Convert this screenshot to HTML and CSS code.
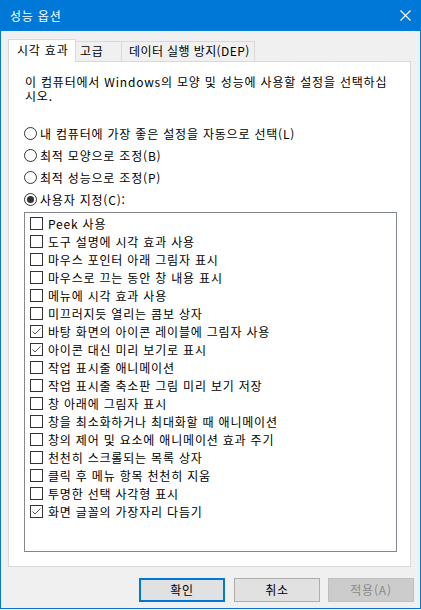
FILE: index.html
```html
<!DOCTYPE html>
<html lang="ko">
<head>
<meta charset="utf-8">
<title>성능 옵션</title>
<link rel="stylesheet" href="styles.css">
</head>
<body>
<div class="window">
  <div class="titlebar">
    <span class="title">성능 옵션</span>
    <svg class="close" width="11" height="11" viewBox="0 0 11 11"><path d="M0.5 0.5 L10.5 10.5 M10.5 0.5 L0.5 10.5" stroke="#fff" stroke-width="1.1" fill="none"/></svg>
  </div>
  <div class="content">
    <div class="tabs">
      <div class="tab active">시각 효과</div>
      <div class="tab t2">고급</div>
      <div class="tab t3">데이터 실행 방지(DEP)</div>
    </div>
    <div class="panel">
      <p class="desc">이 컴퓨터에서 Windows의 모양 및 성능에 사용할 설정을 선택하십<br>시오.</p>
      <div class="radios">
        <div class="radio"><span class="circle"></span><span>내 컴퓨터에 가장 좋은 설정을 자동으로 선택(L)</span></div>
        <div class="radio"><span class="circle"></span><span>최적 모양으로 조정(B)</span></div>
        <div class="radio"><span class="circle"></span><span>최적 성능으로 조정(P)</span></div>
        <div class="radio"><span class="circle on"></span><span>사용자 지정(C):</span></div>
      </div>
      <div class="listbox">
        <div class="item"><span class="box"></span><span>Peek 사용</span></div>
        <div class="item"><span class="box"></span><span>도구 설명에 시각 효과 사용</span></div>
        <div class="item"><span class="box"></span><span>마우스 포인터 아래 그림자 표시</span></div>
        <div class="item"><span class="box"></span><span>마우스로 끄는 동안 창 내용 표시</span></div>
        <div class="item"><span class="box"></span><span>메뉴에 시각 효과 사용</span></div>
        <div class="item"><span class="box"></span><span>미끄러지듯 열리는 콤보 상자</span></div>
        <div class="item"><span class="box"><svg width="11" height="11" viewBox="0 0 11 11"><path d="M1.5 5.5 L4 8 L9.5 2.5" stroke="#555" stroke-width="1" fill="none"/></svg></span><span>바탕 화면의 아이콘 레이블에 그림자 사용</span></div>
        <div class="item"><span class="box"><svg width="11" height="11" viewBox="0 0 11 11"><path d="M1.5 5.5 L4 8 L9.5 2.5" stroke="#555" stroke-width="1" fill="none"/></svg></span><span>아이콘 대신 미리 보기로 표시</span></div>
        <div class="item"><span class="box"></span><span>작업 표시줄 애니메이션</span></div>
        <div class="item"><span class="box"></span><span>작업 표시줄 축소판 그림 미리 보기 저장</span></div>
        <div class="item"><span class="box"></span><span>창 아래에 그림자 표시</span></div>
        <div class="item"><span class="box"></span><span>창을 최소화하거나 최대화할 때 애니메이션</span></div>
        <div class="item"><span class="box"></span><span>창의 제어 및 요소에 애니메이션 효과 주기</span></div>
        <div class="item"><span class="box"></span><span>천천히 스크롤되는 목록 상자</span></div>
        <div class="item"><span class="box"></span><span>클릭 후 메뉴 항목 천천히 지움</span></div>
        <div class="item"><span class="box"></span><span>투명한 선택 사각형 표시</span></div>
        <div class="item"><span class="box"><svg width="11" height="11" viewBox="0 0 11 11"><path d="M1.5 5.5 L4 8 L9.5 2.5" stroke="#555" stroke-width="1" fill="none"/></svg></span><span>화면 글꼴의 가장자리 다듬기</span></div>
      </div>
    </div>
    <div class="buttons">
      <div class="btn default">확인</div>
      <div class="btn b2">취소</div>
      <div class="btn disabled">적용(A)</div>
    </div>
  </div>
</div>
</body>
</html>
```
FILE: styles.css
```css
* { box-sizing: border-box; }
html, body { margin: 0; padding: 0; background: #ffffff; }
body {
  width: 421px;
  height: 610px;
  font-family: "Noto Sans CJK KR", "Noto Sans", sans-serif;
  font-size: 12px;
  letter-spacing: 0.8px;
  color: #000;
}
.window {
  width: 421px;
  height: 609px;
  background: #f0f0f0;
  border: 1px solid #0078d7;
  border-top: 0;
  display: flex;
  flex-direction: column;
}
.titlebar {
  height: 31px;
  background: #0078d7;
  display: flex;
  align-items: center;
  justify-content: space-between;
  padding: 0 9px 0 9px;
  color: #fff;
  flex: none;
}
.title { font-size: 12px; line-height: 16px; }
.close { display: block; }
.content {
  flex: 1;
  display: flex;
  flex-direction: column;
  padding: 8px 0 0 7px;
}
.tabs {
  height: 22px;
  display: flex;
  align-items: flex-end;
  flex: none;
}
.tab {
  height: 20px;
  border: 1px solid #d9d9d9;
  border-bottom: 0;
  border-left: 0;
  background: #f0f0f0;
  line-height: 18px;
  white-space: nowrap;
}
.tab.active {
  height: 23px;
  width: 68px;
  border-left: 1px solid #d9d9d9;
  background: #fff;
  margin-bottom: -1px;
  position: relative;
  z-index: 1;
  padding-left: 8px;
  line-height: 19px;
}
.tab.t2 { width: 46px; padding-left: 4px; }
.tab.t3 { width: 133px; padding-left: 7px; letter-spacing: 0.4px; }
.panel {
  width: 403px;
  height: 506px;
  background: #fff;
  border: 1px solid #d9d9d9;
  padding: 13px 0 0 15px;
  flex: none;
}
.desc {
  margin: 0;
  padding-left: 1px;
  line-height: 14px;
  white-space: nowrap;
}
.radios {
  margin-top: 19px;
  display: flex;
  flex-direction: column;
}
.radio {
  height: 22px;
  display: flex;
  align-items: center;
  white-space: nowrap;
}
.circle {
  width: 13px;
  height: 13px;
  border: 1px solid #333;
  border-radius: 50%;
  margin-right: 3px;
  display: flex;
  align-items: center;
  justify-content: center;
  flex: none;
}
.circle.on::after {
  content: "";
  width: 7px;
  height: 7px;
  border-radius: 50%;
  background: #333;
}
.listbox {
  margin-top: 2px;
  width: 373px;
  height: 340px;
  border: 1px solid #828790;
  padding: 1px 0 0 5px;
}
.item {
  height: 18px;
  display: flex;
  align-items: center;
  white-space: nowrap;
}
.box {
  width: 13px;
  height: 13px;
  border: 1px solid #333;
  margin-right: 5px;
  flex: none;
  display: flex;
  align-items: center;
  justify-content: center;
}
.box svg { display: block; }
.buttons {
  margin-top: 11px;
  display: flex;
  justify-content: flex-end;
  padding-right: 6px;
}
.btn {
  width: 86px;
  height: 24px;
  background: #e1e1e1;
  border: 1px solid #adadad;
  display: flex;
  align-items: center;
  justify-content: center;
  line-height: 16px;
}
.btn.default { border: 2px solid #0078d7; margin-right: 9px; }
.btn.b2 { margin-right: 8px; }
.btn.disabled {
  background: #cccccc;
  border-color: #bfbfbf;
  color: #8a8a8a;
}
```
